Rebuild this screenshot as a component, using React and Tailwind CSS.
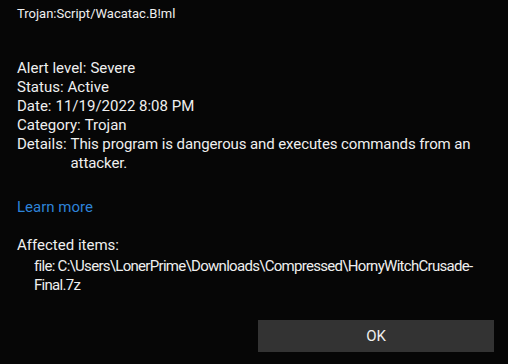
export default function App() {
  const rows = [
    ['Alert level:', 'Severe'],
    ['Status:', 'Active'],
    ['Date:', '11/19/2022 8:08 PM'],
    ['Category:', 'Trojan'],
  ]

  return (
    <div
      className="w-[508px] h-[364px] flex flex-col bg-[#060606] text-[#efefef] overflow-hidden"
      style={{ fontFamily: '"Segoe UI", Roboto, "Noto Sans", sans-serif' }}
    >
      <div className="pl-[17px] pt-[5px] text-[13px] leading-[18px]">Trojan:Script/Wacatac.B!ml</div>

      <div className="pl-[17px] pr-[17px] mt-[36px] text-[15px] leading-[19px]">
        {rows.map(([label, value]) => (
          <div key={label} className="flex gap-[4px]">
            <span className="shrink-0">{label}</span>
            <span>{value}</span>
          </div>
        ))}
        <div className="flex gap-[4px]">
          <span className="shrink-0">Details:</span>
          <span className="whitespace-nowrap tracking-[-0.1px]">
            This program is dangerous and executes commands from an
            <br />
            attacker.
          </span>
        </div>
      </div>

      <a className="ml-[17px] mt-[25px] text-[15px] leading-[19px] text-[#2d82d8] w-fit">Learn more</a>

      <div className="pl-[17px] mt-[19px] text-[15px] leading-[19px]">Affected items:</div>
      <div className="pl-[34px] mt-[2px] text-[15px] leading-[19px] whitespace-nowrap tracking-[-0.7px]">
        file: C:\Users\LonerPrime\Downloads\Compressed\HornyWitchCrusade-
        <br />
        Final.7z
      </div>

      <div className="mt-auto flex justify-end pr-[14px] pb-[12px]">
        <button className="w-[236px] h-[32px] bg-[#333333] text-[15px] text-[#efefef]">OK</button>
      </div>
    </div>
  )
}
